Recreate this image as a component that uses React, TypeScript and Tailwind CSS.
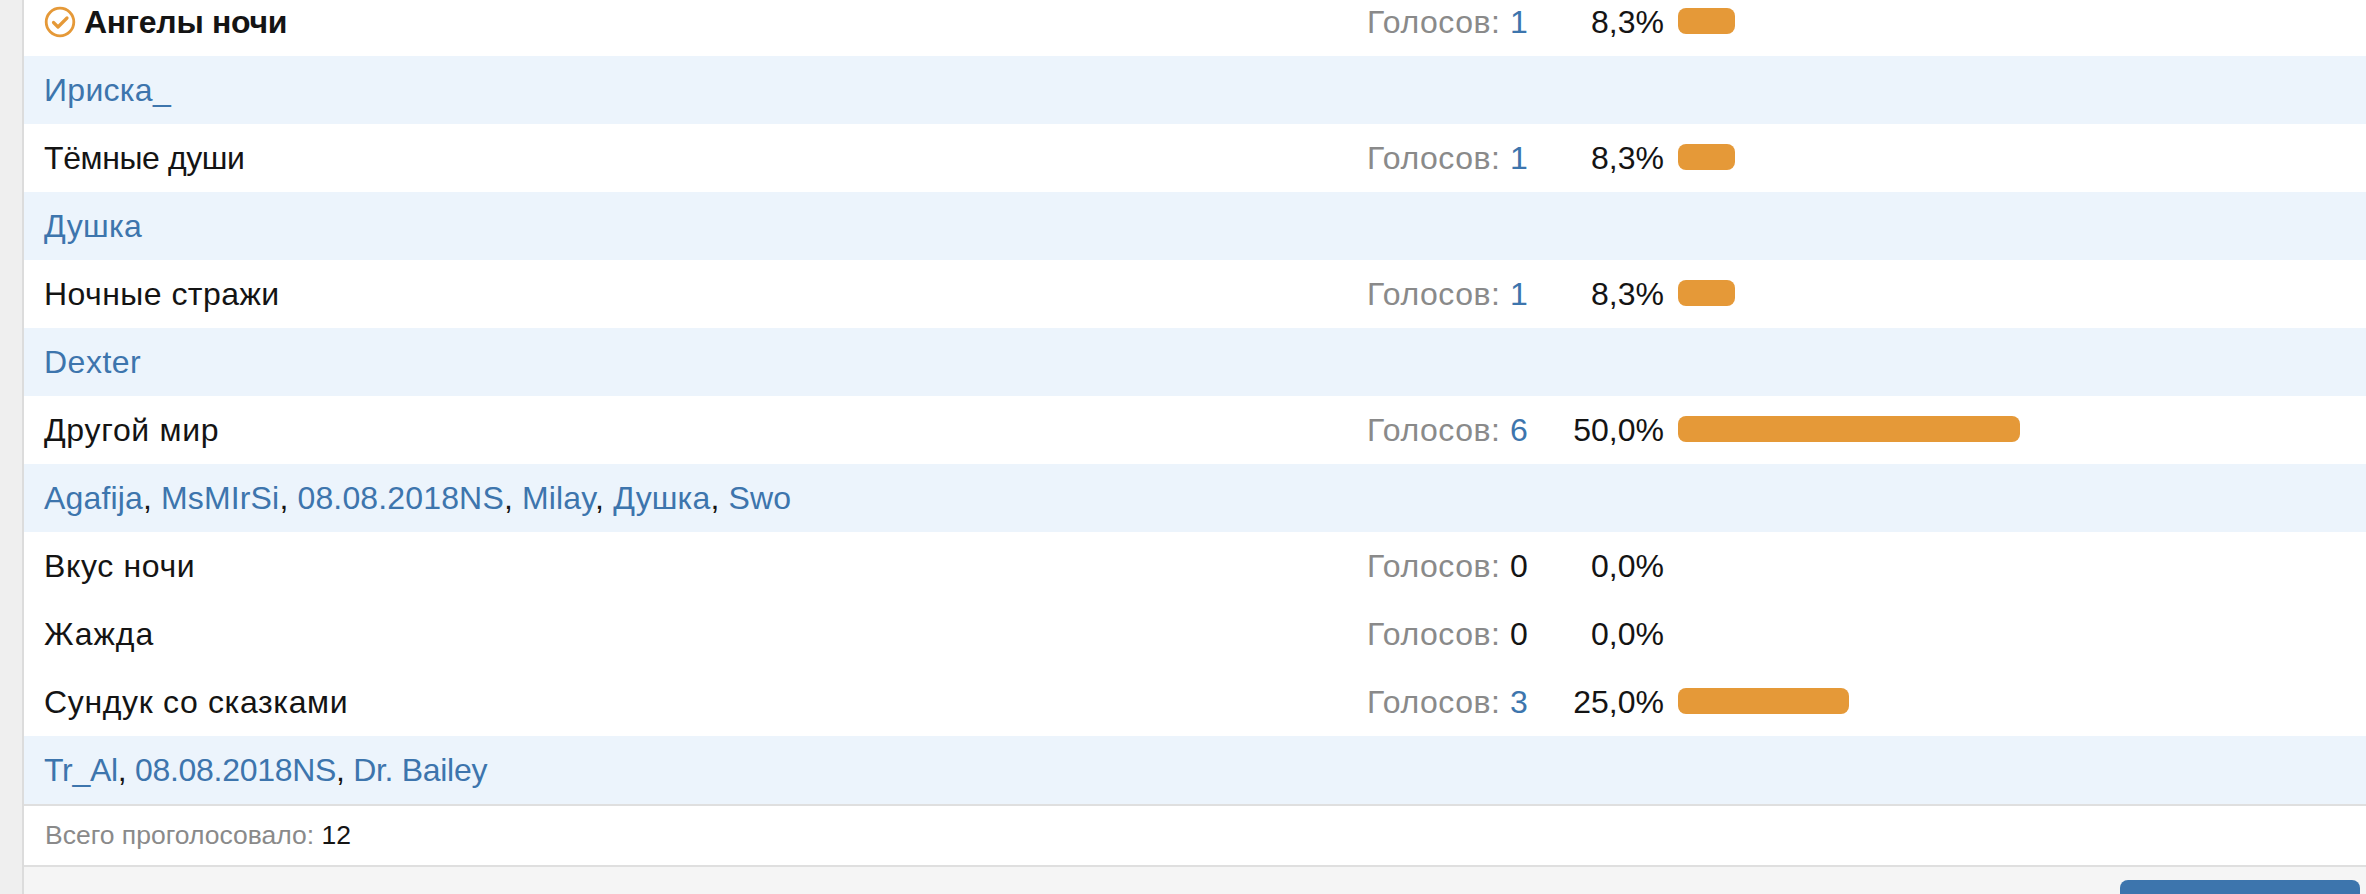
const font = { fontFamily: '"Liberation Sans", Arial, sans-serif' }

type Poll = {
  name: string
  nameClass: string
  votes: number
  percent: string
  share: number
  voters?: string[]
  votersClass?: string
  mine?: boolean
}

const polls: Poll[] = [
  {
    name: 'Ангелы ночи',
    nameClass: 'font-bold tracking-[-0.3px]',
    votes: 1,
    percent: '8,3%',
    share: 8.3,
    voters: ['Ириска_'],
    votersClass: 'tracking-[0.3px]',
    mine: true,
  },
  {
    name: 'Тёмные души',
    nameClass: 'tracking-[-0.4px]',
    votes: 1,
    percent: '8,3%',
    share: 8.3,
    voters: ['Душка'],
    votersClass: 'tracking-[0.3px]',
  },
  {
    name: 'Ночные стражи',
    nameClass: 'tracking-[0.45px]',
    votes: 1,
    percent: '8,3%',
    share: 8.3,
    voters: ['Dexter'],
    votersClass: 'tracking-[0.5px]',
  },
  {
    name: 'Другой мир',
    nameClass: 'tracking-[0.7px]',
    votes: 6,
    percent: '50,0%',
    share: 50,
    voters: ['Agafija', 'MsMIrSi', '08.08.2018NS', 'Milay', 'Душка', 'Swo'],
    votersClass: 'tracking-[0.15px]',
  },
  { name: 'Вкус ночи', nameClass: 'tracking-[0.65px]', votes: 0, percent: '0,0%', share: 0 },
  { name: 'Жажда', nameClass: 'tracking-[0.9px]', votes: 0, percent: '0,0%', share: 0 },
  {
    name: 'Сундук со сказками',
    nameClass: 'tracking-[0.65px]',
    votes: 3,
    percent: '25,0%',
    share: 25,
    voters: ['Tr_Al', '08.08.2018NS', 'Dr. Bailey'],
    votersClass: 'tracking-[-0.3px]',
  },
]

function CheckCircle() {
  return (
    <svg width="32" height="32" viewBox="0 0 32 32" fill="none" className="mr-[8px] shrink-0">
      <circle cx="16" cy="16" r="13.8" stroke="#e59938" strokeWidth="2.8" />
      <path d="M9.5 16.5l4.5 4.5 9-9" stroke="#e59938" strokeWidth="3.2" strokeLinecap="round" strokeLinejoin="round" />
    </svg>
  )
}

function PollRow({ poll }: { poll: Poll }) {
  return (
    <>
      <div className="flex h-[68px] items-center bg-white text-[#141414]">
        <div className="flex w-[1343px] items-center pl-[20px]">
          {poll.mine && <CheckCircle />}
          <span className={poll.nameClass}>{poll.name}</span>
        </div>
        <div className="w-[173px] text-[#8a8a8a] tracking-[0.55px]">
          Голосов:{' '}
          <span className={poll.votes > 0 ? 'text-[#3d75ad]' : 'text-[#141414]'}>{poll.votes}</span>
        </div>
        <div className="w-[124px] text-right">{poll.percent}</div>
        <div className="ml-[14px] w-[684px]">
          {poll.share > 0 && (
            <div className="-mt-[2px] h-[26px] rounded-[8px] bg-[#e59938]" style={{ width: `${poll.share * 6.84}px` }} />
          )}
        </div>
      </div>
      {poll.voters && (
        <div className="flex h-[68px] items-center bg-[#ecf4fc] pl-[20px] text-[#141414]">
          <span className={poll.votersClass}>
            {poll.voters.map((voter, i) => (
              <span key={voter}>
                {i > 0 && ', '}
                <span className="text-[#3d75ad]">{voter}</span>
              </span>
            ))}
          </span>
        </div>
      )}
    </>
  )
}

export default function App() {
  return (
    <div className="h-[894px] w-full overflow-hidden bg-[#efefef] pl-[22px] text-[32px]" style={font}>
      <div className="-mt-[12px] border-l-2 border-[#dcdcdc]">
        {polls.map((poll) => (
          <PollRow key={poll.name} poll={poll} />
        ))}
        <div className="flex h-[63px] items-center border-y-2 border-[#dfdfdf] bg-white pl-[21px] text-[26.5px] text-[#8a8a8a]">
          Всего проголосовало:&nbsp;<span className="text-[#141414]">12</span>
        </div>
        <div className="flex h-[40px] justify-end bg-[#f5f5f5] pr-[6px] pt-[13px]">
          <div className="h-[40px] w-[240px] rounded-[8px] bg-[#3d75ad]" />
        </div>
      </div>
    </div>
  )
}
